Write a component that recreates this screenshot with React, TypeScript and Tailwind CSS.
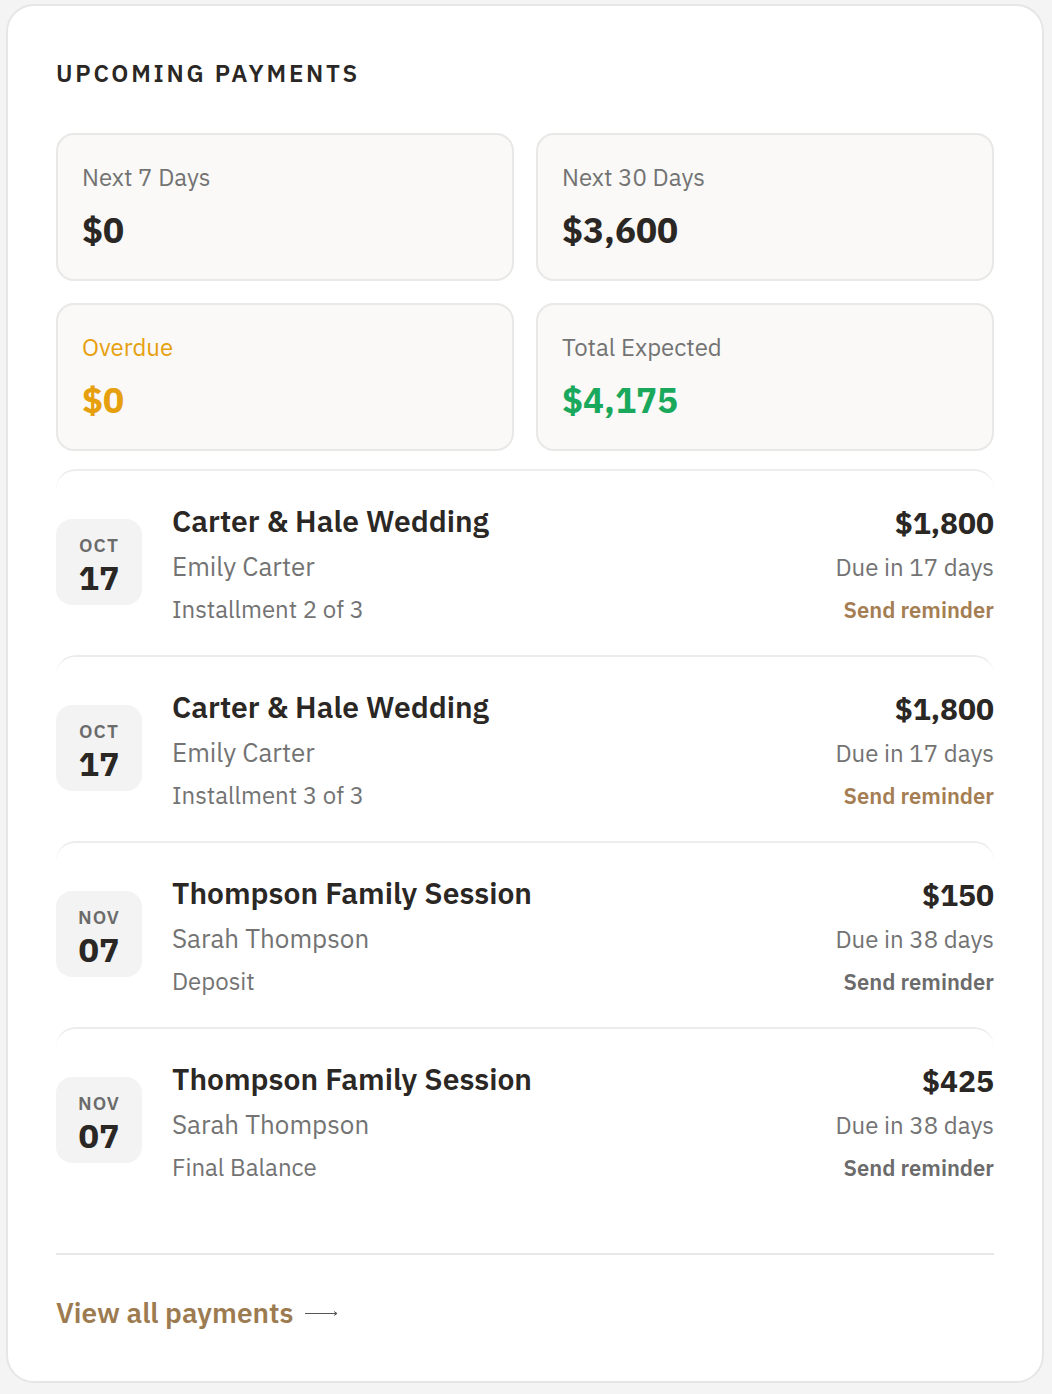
type Payment = {
  month: string;
  day: string;
  title: string;
  client: string;
  note: string;
  amount: string;
  due: string;
  urgent: boolean;
};

const payments: Payment[] = [
  { month: 'OCT', day: '17', title: 'Carter & Hale Wedding', client: 'Emily Carter', note: 'Installment 2 of 3', amount: '$1,800', due: 'Due in 17 days', urgent: true },
  { month: 'OCT', day: '17', title: 'Carter & Hale Wedding', client: 'Emily Carter', note: 'Installment 3 of 3', amount: '$1,800', due: 'Due in 17 days', urgent: true },
  { month: 'NOV', day: '07', title: 'Thompson Family Session', client: 'Sarah Thompson', note: 'Deposit', amount: '$150', due: 'Due in 38 days', urgent: false },
  { month: 'NOV', day: '07', title: 'Thompson Family Session', client: 'Sarah Thompson', note: 'Final Balance', amount: '$425', due: 'Due in 38 days', urgent: false },
];

function StatCard({ label, value, labelClass, valueClass }: { label: string; value: string; labelClass: string; valueClass: string }) {
  return (
    <div className="h-[148px] rounded-[18px] border-2 border-[#e8e8e6] bg-[#faf9f7] px-[24px] pt-[26px]">
      <div className={`text-[24px] leading-[32px] ${labelClass}`}>{label}</div>
      <div className={`mt-[16px] text-[35px] font-bold leading-[42px] ${valueClass}`}>{value}</div>
    </div>
  );
}

function PaymentRow({ p }: { p: Payment }) {
  return (
    <div className="flex h-[186px] items-center rounded-[20px] border-t-2 border-[#ececec] pb-[2px]">
      <div className="flex h-[86px] w-[86px] shrink-0 flex-col items-center justify-center rounded-[16px] bg-[#f3f3f3] pt-[6px]">
        <div className="text-[19px] font-semibold leading-[20px] tracking-[0.06em] text-[#6b6b6b]">{p.month}</div>
        <div className="mt-[3px] text-[34px] font-bold leading-[38px] text-[#2a2724]">{p.day}</div>
      </div>
      <div className="ml-[30px] flex-1 pt-[2px]">
        <div className="text-[30px] font-semibold leading-[36px] text-[#2a2724]">{p.title}</div>
        <div className="mt-[11px] text-[26px] leading-[32px] text-[#737373]">{p.client}</div>
        <div className="mt-[12px] text-[24px] leading-[30px] text-[#737373]">{p.note}</div>
      </div>
      <div className="flex flex-col items-end pt-[5px]">
        <div className="text-[30px] font-bold leading-[36px] text-[#2a2724]">{p.amount}</div>
        <div className="mt-[10px] text-[24px] leading-[32px] text-[#737373]">{p.due}</div>
        <button className={`mt-[12px] text-[22px] font-semibold leading-[30px] ${p.urgent ? 'text-[#a47e52]' : 'text-[#6b6b6b]'}`}>
          Send reminder
        </button>
      </div>
    </div>
  );
}

export default function App() {
  return (
    <div className="min-h-screen bg-[#f4f4f4] pb-[8px] pl-[6px] pr-[8px] pt-[4px]" style={{ fontFamily: '"IBM Plex Sans", "Noto Sans", sans-serif' }}>
      <div className="rounded-[28px] border-2 border-[#e6e6e6] bg-white px-[48px] pb-[52px] pt-[53px]">
        <h2 className="text-[24px] font-semibold leading-[28px] tracking-[0.115em] text-[#2a2724]">UPCOMING PAYMENTS</h2>

        <div className="mt-[46px] grid grid-cols-2 gap-[22px]">
          <StatCard label="Next 7 Days" value="$0" labelClass="text-[#737373]" valueClass="text-[#2a2724]" />
          <StatCard label="Next 30 Days" value="$3,600" labelClass="text-[#737373]" valueClass="text-[#2a2724]" />
          <StatCard label="Overdue" value="$0" labelClass="text-[#e6a00e]" valueClass="text-[#e6a00e]" />
          <StatCard label="Total Expected" value="$4,175" labelClass="text-[#737373]" valueClass="text-[#1aa85c]" />
        </div>

        <div className="mt-[18px]">
          {payments.map((p, i) => (
            <PaymentRow key={i} p={p} />
          ))}
        </div>

        <div className="mt-[40px] border-t-2 border-[#e8e8e8] pt-[42px]">
          <a className="flex items-center gap-[12px] text-[28px] font-semibold leading-[32px] text-[#9d7b50]">
            View all payments
            {/* long thin arrow */}
            <svg width="33" height="8" viewBox="0 0 33 8" fill="none" stroke="#555" strokeWidth="1">
              <path d="M0 4.5h32" />
              <path d="M29 2.5l3 2-3 2" />
            </svg>
          </a>
        </div>
      </div>
    </div>
  );
}
